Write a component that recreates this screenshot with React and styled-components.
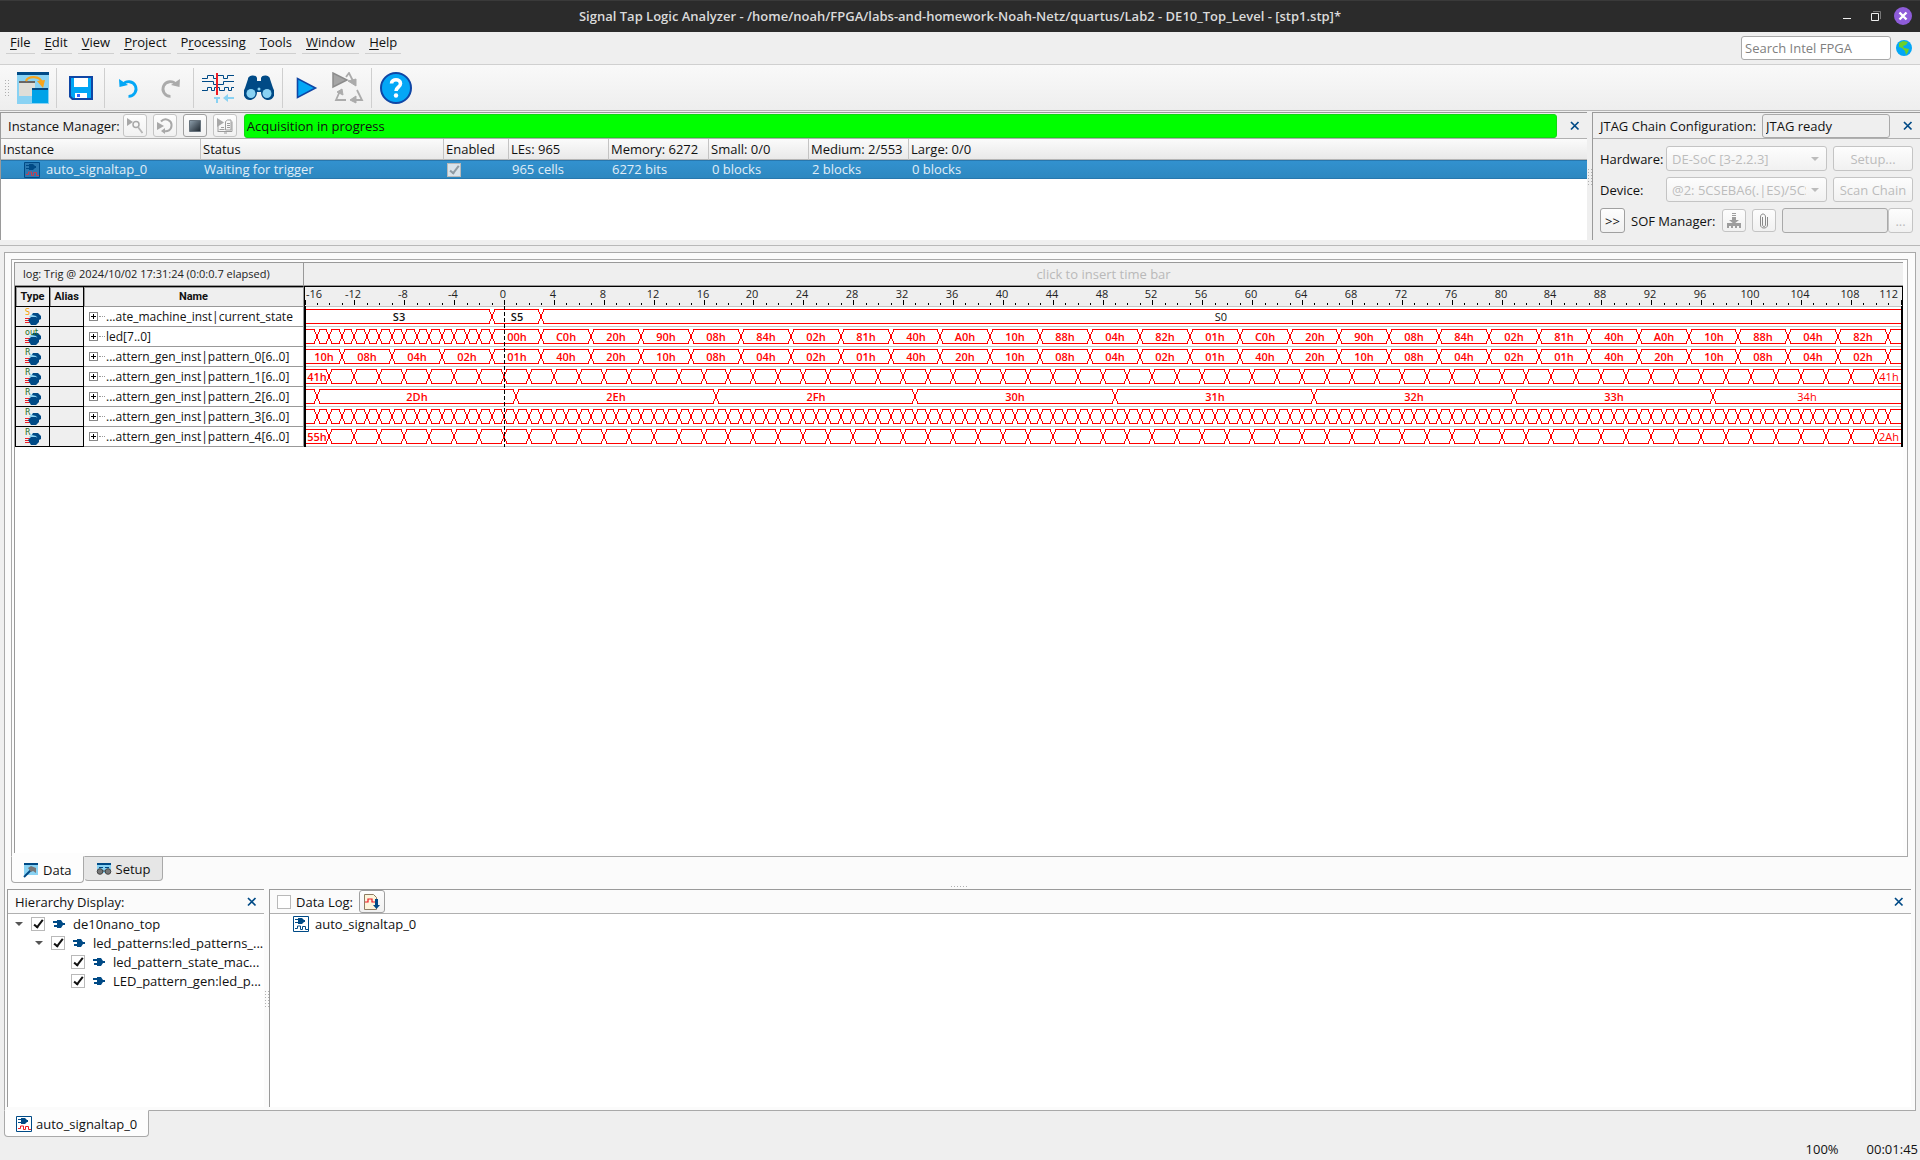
import React, { useLayoutEffect, useRef, useState } from "react";
import styled, { createGlobalStyle, css } from "styled-components";

const sans = `"Open Sans", "Noto Sans", sans-serif`;
const navy = "#004a86";
const line = "#a9a9a9";

const GlobalStyle = createGlobalStyle`
  *, *::before, *::after { box-sizing: border-box; }
  body { margin: 0; background: #efefef; }
  button, input, select { font: inherit; color: inherit; margin: 0; }
`;

/* ---------- window frame ---------- */

const Window = styled.div`
  display: flex;
  flex-direction: column;
  min-height: 100vh;
  background: #efefef;
  color: #111;
  font: 13px/18px ${sans};
`;

const TitleBar = styled.header`
  display: grid;
  grid-template-columns: 1fr auto 1fr;
  align-items: center;
  height: 32px;
  padding: 0 8px 1px;
  background: #2b2b2b;
  border-top: 1px solid #3a3a3a;
`;

const Title = styled.h1`
  grid-column: 2;
  margin: 0;
  color: #dadada;
  font: 600 13px/18px ${sans};
`;

const WindowButtons = styled.div`
  display: flex;
  justify-content: flex-end;
  gap: 10px;
`;

const WindowButton = styled.button`
  width: 18px;
  height: 18px;
  padding: 0;
  border: 0;
  border-radius: 50%;
  background: ${(p) => (p.$accent ? "#8e5cd9" : "transparent")};
  svg { display: block; }
`;

const MenuBar = styled.nav`
  display: flex;
  align-items: flex-start;
  gap: 6px;
  height: 33px;
  padding: 0 8px 0 6px;
  border-bottom: 1px solid #d0d0d0;
`;

const MenuButton = styled.button`
  height: 22px;
  padding: 0 4px 2px;
  border: 0;
  border-bottom: 1px solid #cfcfcf;
  background: none;
  line-height: 18px;
  u { text-underline-offset: 2px; }
`;

const SearchForm = styled.form`
  display: flex;
  align-items: center;
  gap: 5px;
  margin: 4px 0 0 auto;
`;

const fieldLook = css`
  height: 24px;
  padding: 0 3px;
  border: 1px solid ${line};
  border-radius: 3px;
  outline: 0;
`;

const SearchInput = styled.input`
  ${fieldLook}
  width: 150px;
  background: #fff;
  &::placeholder { color: #7f7f7f; opacity: 1; }
`;

const BareButton = styled.button`
  display: flex;
  padding: 0;
  border: 0;
  background: none;
`;

const ToolBar = styled.div`
  display: flex;
  align-items: center;
  height: 46px;
  padding-left: 4px;
  background: linear-gradient(#f9f9f9, #eee);
  border-bottom: 1px solid #b5b5b5;
`;

const Grip = styled.span`
  width: ${(p) => (p.$flat ? 18 : 5)}px;
  height: ${(p) => (p.$flat ? 2 : 17)}px;
  background-image: radial-gradient(#b0b0b0 0 1px, transparent 1px);
  background-size: 3px 3px;
`;

const ToolButton = styled.button`
  display: flex;
  justify-content: center;
  align-items: center;
  width: 41px;
  height: 40px;
  padding: 0;
  border: 0;
  background: none;
`;

const ToolGroup = styled.div`
  display: flex;
  padding: 0 3px;
  & + & { border-left: 1px solid #cfcfcf; }
`;

/* ---------- docked panels ---------- */

const TopRow = styled.div`
  display: grid;
  grid-template-columns: minmax(0, 1fr) 5px 328px;
  padding: 1px 0 5px;
  border-bottom: 1px solid #b8b8b8;
`;

const Splitter = styled.div`
  display: flex;
  justify-content: center;
  align-items: center;
  overflow: hidden;
`;

const Panel = styled.section`
  display: flex;
  flex-direction: column;
  min-width: 0;
  border: solid #9a9a9a;
  border-width: 1px 0 0 1px;
  background: ${(p) => p.$bg || "#fff"};
`;

const PanelHead = styled.div`
  display: flex;
  align-items: center;
  gap: ${(p) => p.$gap || 6}px;
  height: ${(p) => p.$height || 26}px;
  padding: 0 7px;
  border-bottom: 1px solid #b0b0b0;
  background: ${(p) => p.$bg || "#efefef"};
`;

const PanelTitle = styled.h2`
  margin: 0;
  font: inherit;
  white-space: nowrap;
`;

const ButtonStrip = styled.div`
  display: flex;
  gap: 6px;
  margin-right: 4px;
`;

const CloseButton = styled(BareButton)`
  flex: none;
  justify-content: center;
  width: 10px;
  margin-left: auto;
`;

const raised = css`
  border: 1px solid ${(p) => (p.disabled ? "#c4c4c4" : "#a0a0a0")};
  border-radius: 3px;
  background: linear-gradient(#fdfdfd, #f1f1f1);
  color: ${(p) => (p.disabled ? "#bcbcbc" : "#111")};
`;

const PushButton = styled.button`
  ${raised}
  display: flex;
  flex: none;
  justify-content: center;
  align-items: center;
  width: ${(p) => p.$width || 24}px;
  height: ${(p) => p.$height || 23}px;
  padding: 0;
  white-space: nowrap;
`;

const Progress = styled.div`
  flex: 1;
  height: 24px;
  margin-right: 10px;
  padding: 0 2px;
  border: 1px solid #12d812;
  border-radius: 3px;
  background: #00ff00;
  line-height: 22px;
`;

const InstanceTable = styled.table`
  width: 100%;
  table-layout: fixed;
  border-spacing: 0;
  text-align: left;
  th {
    height: 21px;
    padding: 0 2px;
    font-weight: 400;
    white-space: nowrap;
    background: linear-gradient(#fbfbfb, #e9e9e9);
    border-right: 1px solid #c4c4c4;
    border-bottom: 1px solid #b5b5b5;
  }
  th:last-child { border-right: 0; }
  td {
    height: 19px;
    padding: 0 3px;
    color: #e0edf6;
    line-height: 17px;
    white-space: nowrap;
    background: linear-gradient(#3291cf, #2d88c0);
    border: solid #2877ad;
    border-width: 1px 0;
  }
`;

const Column = styled.col`
  width: ${(p) => (p.$width ? `${p.$width}px` : "auto")};
`;

const IconText = styled.span`
  display: flex;
  align-items: center;
  gap: 6px;
  padding-left: ${(p) => p.$indent || 0}px;
  svg { flex: none; }
`;

const CheckBox = styled.input`
  appearance: none;
  display: block;
  flex: none;
  position: relative;
  width: 14px;
  height: 14px;
  border: 1px solid #b9b9b9;
  background: ${(p) => (p.disabled ? "#d9e3ea" : "#fff")};
  &:checked::after {
    content: "";
    position: absolute;
    left: 4px;
    top: 0;
    width: 5px;
    height: 10px;
    border: solid ${(p) => (p.disabled ? "#8f9ba3" : "#111")};
    border-width: 0 2px 2px 0;
    transform: rotate(38deg);
  }
`;

const JtagForm = styled.form`
  display: flex;
  flex-direction: column;
  gap: 6px;
  padding: 7px;
`;

const FormRow = styled.div`
  display: grid;
  grid-template-columns: 60px minmax(0, 1fr) 80px;
  align-items: center;
  column-gap: 6px;
`;

const SofRow = styled.div`
  display: flex;
  align-items: center;
  gap: 6px;
`;

const SelectWrap = styled.div`
  display: grid;
  align-items: center;
  > * { grid-area: 1 / 1; }
  > svg { justify-self: end; margin-right: 8px; pointer-events: none; }
`;

const Select = styled.select`
  ${raised}
  appearance: none;
  width: 100%;
  height: 25px;
  padding: 0 20px 0 5px;
  opacity: 1;
  overflow: hidden;
`;

const ReadOnlyField = styled.input`
  ${fieldLook}
  flex: 1;
  min-width: 0;
  height: ${(p) => (p.disabled ? 25 : 24)}px;
  margin-right: ${(p) => (p.disabled ? 0 : 7)}px;
  background: ${(p) => (p.disabled ? "#ebebeb" : "#efefef")};
`;

const FieldWithButton = styled.div`
  display: flex;
  flex: 1;
  min-width: 0;
`;

/* ---------- document area ---------- */

const SplitHandle = styled.div`
  display: flex;
  justify-content: center;
  align-items: center;
  height: ${(p) => p.$height}px;
`;

const Document = styled.main`
  display: flex;
  flex: 1;
  flex-direction: column;
  margin: 6px 4px 0;
  padding: 6px 4px 3px 2px;
  border: 1px solid ${line};
  background: #fbfbfb;
`;

const DataFrame = styled.div`
  display: flex;
  flex: 1;
  flex-direction: column;
  margin: 0 3px 0 4px;
  padding: 2px 4px 3px 2px;
  border: 1px solid ${line};
  background: #fdfdfd;
`;

const DataPane = styled.div`
  display: grid;
  flex: 1;
  grid-template-columns: 289px minmax(0, 1fr);
  grid-template-rows: 23px 1fr;
  border: solid #999;
  border-width: 1px 0 0 1px;
  background: #fff;
`;

const LogCell = styled.div`
  padding: 0 8px;
  border-right: 1px solid #999;
  border-bottom: 1px solid #999;
  background: #efefef;
  color: #222;
  font-size: 11px;
  line-height: 22px;
  white-space: nowrap;
`;

const TimeBarCell = styled(LogCell)`
  border-right: 0;
  color: #b9b9b9;
  font-size: 13px;
  text-align: center;
`;

const SignalTable = styled.table`
  align-self: start;
  width: 100%;
  table-layout: fixed;
  border-spacing: 0;
  font-size: 12px;
  th {
    height: 20px;
    padding: 0;
    border: solid #000;
    border-width: 1px 1px 0 0;
    background: #efefef;
    box-shadow: inset 1px 1px #999;
    font: 700 11px/14px Roboto, sans-serif;
  }
  td {
    height: 20px;
    padding: 0;
    border: solid #000;
    border-width: 1px 1px 0 0;
    background: #efefef;
  }
  th:first-child, td:first-child { border-left: 1px solid #000; }
  td:last-child {
    border-color: #999;
    background: #fff;
  }
  th:last-child { border-right-color: #999; }
  tr:last-child td { height: 21px; border-bottom-width: 1px; }
  svg { display: block; }
`;

const TypeCell = styled.span`
  display: flex;
  justify-content: center;
`;

const NameCell = styled.span`
  display: flex;
  align-items: center;
  gap: 1px;
  padding-left: 5px;
  white-space: nowrap;
`;

const NodeDots = styled.span`
  flex: none;
  width: 6px;
  border-top: 1px dotted #999;
`;

const WaveArea = styled.div`
  min-width: 0;
  svg { display: block; }
`;

const WaveText = styled.text`
  font: ${(p) => (p.$bold ? 600 : 400)} 11px ${sans};
  fill: ${(p) => p.$color};
  text-anchor: ${(p) => p.$anchor || "middle"};
`;

const Tabs = styled.div`
  display: flex;
  align-items: flex-start;
  margin: -1px 4px 0;
`;

const Tab = styled.button`
  display: flex;
  align-items: center;
  gap: 4px;
  height: ${(p) => (p.$active ? 27 : 25)}px;
  padding: 0 11px;
  border: 1px solid ${line};
  border-top-color: ${(p) => (p.$active ? "#fdfdfd" : line)};
  border-left-color: ${(p) => (p.$active ? line : "transparent")};
  border-radius: 0 0 4px 4px;
  background: ${(p) => (p.$active ? "#fdfdfd" : "#e6e6e6")};
`;

const LowerRow = styled.div`
  display: grid;
  grid-template-columns: 257px 5px minmax(0, 1fr);
  height: 218px;
`;

const TreeList = styled.ul`
  margin: 0;
  padding: 0;
  list-style: none;
`;

const TreeItem = styled.li`
  display: grid;
  grid-template-columns: 8px 14px 12px minmax(0, 1fr);
  align-items: center;
  column-gap: 8px;
  height: 19px;
  padding-left: ${(p) => 7 + p.$level * 20}px;
  label { white-space: nowrap; }
`;

const LogItem = styled(TreeItem)`
  display: flex;
  gap: 6px;
  padding-left: 23px;
`;

const CheckLabel = styled.label`
  display: flex;
  align-items: center;
  gap: 5px;
`;

const StatusBar = styled.footer`
  display: flex;
  justify-content: flex-end;
  gap: 28px;
  height: 23px;
  padding: 3px 2px 0;
`;

/* ---------- icons ---------- */

const CloseIcon = () => (
  <svg width="10" height="10" viewBox="0 0 10 10" stroke={navy} strokeWidth="1.7">
    <path d="M1 1l7.5 7.5M8.500 1L1 8.500" />
  </svg>
);

const SwapWindowsIcon = () => (
  <svg width="32" height="32" viewBox="0 0 32 32">
    <path fill="#89d2f3" d="M0 0h32v32H0z" />
    <path fill={navy} d="M0 0h32v3H0z" />
    <path fill="#deded8" d="M2 9h16v15H2z" />
    <path fill="#666" d="M2 9h16v2H2z" />
    <path d="M9 9c2-5 14-6 16 2" fill="none" stroke="#f8a51b" strokeWidth="2.200" />
    <path fill="#f8a51b" d="M20 9l8-1-2 8z" />
    <path fill="#00a3e8" d="M15 16h16v15H15z" />
    <path fill={navy} d="M15 16h16v2H15z" />
  </svg>
);

const SaveIcon = () => (
  <svg width="24" height="24" viewBox="0 0 24 24">
    <path fill="#0f46a5" d="M0 0h24v24H3l-3-3z" />
    <path fill="#00a6f5" d="M2 2h20v20H4l-2-2z" />
    <path fill="#fff" d="M5 2h14v9H5zM6 17h12v5H6z" />
    <path fill="#2d63ff" d="M8 18h3v3H8z" />
  </svg>
);

const UndoIcon = () => (
  <svg width="20" height="22" viewBox="0 0 20 22" fill="none">
    <path d="M4 7.500A7.300 7.300 0 1 1 9.500 19.300" stroke="#04a7f6" strokeWidth="2.800" />
    <path fill="#04a7f6" d="M0 2l.5 8 8.500-2z" />
  </svg>
);

const RedoIcon = () => (
  <svg width="20" height="22" viewBox="0 0 20 22" fill="none">
    <path d="M16 7.500A7.300 7.300 0 1 0 10.500 19.300" stroke="#ababab" strokeWidth="2.800" />
    <path fill="#ababab" d="M20 2l-.5 8-8.500-2z" />
  </svg>
);

const WaveToolIcon = () => (
  <svg width="32" height="32" viewBox="0 0 32 32" fill="none">
    <path
      stroke={navy}
      d="M0 6.500h5.500v-3h6v3h4v-3h6v3h4v-3H32M0 9.500h11.500v3h10v-3H32M0 18.500h5.500v-3h4v3h3v-3h5v3h5v-3h4v3h3v-3H32"
    />
    <path fill="#ed1c24" d="M14 1h2v22h-2z" />
    <path fill="#89d2f3" d="M12 25h6v2h-2v4h-2v-4h-2zM21 26l5-4v3h6v2h-6v3z" />
  </svg>
);

const BinocularsIcon = () => (
  <svg width="30" height="26" viewBox="0 0 30 26">
    <path
      fill={navy}
      d="M4 4c0-4 8-5 9-1v3h4V3c1-4 9-3 9 1l3 9c4 7-1 13-6 12-4-1-6-4-6-8h-4c0 4-2 7-6 8-5 1-10-5-6-12z"
    />
    <circle cx="7" cy="18.500" r="4.500" fill="#89d2f3" />
    <circle cx="23" cy="18.500" r="4.500" fill="#89d2f3" />
    <circle cx="15" cy="14" r="1.500" fill="#89d2f3" />
  </svg>
);

const RunIcon = () => (
  <svg width="22" height="22" viewBox="0 0 22 22">
    <path d="M1.500 1.500v19l18-9.500z" fill="#04a7f6" stroke="#0f46a5" strokeWidth="1.600" />
  </svg>
);

const LoopRunIcon = () => (
  <svg width="32" height="32" viewBox="0 0 32 32" fill="none" stroke="#ababab" strokeWidth="1.800">
    <path d="M14 5l3-4 4 8M25 18l5 10h-7M14 28H4l4-9" />
    <path fill="#ababab" strokeWidth="1" d="M16 9l8-2v7zM18 28l6-4v7zM5 20l5-3 1 6z" />
    <path fill="#a5a5a5" stroke="#8c8c8c" strokeWidth="1.500" d="M1 1v14l14-7z" />
  </svg>
);

const HelpIcon = () => (
  <svg width="32" height="32" viewBox="0 0 32 32">
    <circle cx="16" cy="16" r="15" fill="#04a7f6" stroke="#0f46a5" strokeWidth="2" />
    <path d="M11.500 11.500c0-5 9-5 9 0 0 4-4.500 3.500-4.500 7.500" fill="none" stroke="#fff" strokeWidth="3.600" />
    <circle cx="16" cy="23.500" r="2.200" fill="#fff" />
  </svg>
);

const GlobeIcon = () => (
  <svg width="16" height="16" viewBox="0 0 16 16">
    <circle cx="8" cy="8" r="8" fill="#04a7f6" />
    <path fill="#6cd02a" d="M3 3l4-2 5 1-2 3-3 1 1 2 5 1-1 3-2 3-1-4-3-3-3-1z" />
  </svg>
);

const RunOnceIcon = () => (
  <svg width="16" height="16" viewBox="0 0 16 16" fill="none">
    <path fill="#a8a8a8" d="M0 0v8l6-4z" />
    <circle cx="9" cy="6.500" r="3" stroke="#a8a8a8" strokeWidth="1.500" />
    <path d="M11 9l4.500 6" stroke="#b5b5b5" strokeWidth="1.800" />
  </svg>
);

const RepeatIcon = () => (
  <svg width="16" height="16" viewBox="0 0 16 16" fill="none">
    <path d="M4 3.500c4-4.500 11-1 10.500 4 0 4.500-4 6.500-8 5.500" stroke="#a8a8a8" strokeWidth="2" />
    <path fill="#a8a8a8" d="M0 4v8l7-4zM8 10v6l-4-3z" />
  </svg>
);

const StopIcon = () => (
  <svg width="12" height="12" viewBox="0 0 12 12">
    <defs>
      <linearGradient id="stop" x2="1" y2="1">
        <stop stopColor="#8fa0ad" />
        <stop offset="1" stopColor="#1c252d" />
      </linearGradient>
    </defs>
    <path fill="url(#stop)" stroke="#66727c" d="M.5.5h11v11H.5z" />
  </svg>
);

const BookIcon = () => (
  <svg width="16" height="16" viewBox="0 0 16 16" fill="none" stroke="#9c9c9c">
    <path d="M1 13.500h14v-10M8.500 12V3.500l2-1.500h3.500v10h-4zM1 5v9M10 5.500h3M10 7.500h3M10 9.500h3M2.500 11.500h5M4 9.500h3M7 15h3" />
    <path fill="#a8a8a8" stroke="none" d="M0 0v9l7-4.500z" />
  </svg>
);

const SofIcon = () => (
  <svg width="16" height="16" viewBox="0 0 16 16" fill="#9d9d9d">
    <path d="M6 0h4v1H6zM6 2h4v1H6zM6 4h4v3h3l-5 4-5-4h3zM1 10h14v3H1zM1 13h2v2H1zM5 13h2v2H5zM9 13h2v2H9zM13 13h2v2h-2z" />
  </svg>
);

const ClipIcon = () => (
  <svg width="8" height="16" viewBox="0 0 8 16" fill="none" stroke="#8a8a8a">
    <path d="M2.500 4v8c0 2 3 2 3 0V4c0-4-5-4-5 0v8c0 4 7 4 7 0V4" />
  </svg>
);

const InstanceIcon = ({ wave = "#ed1c24", fill = "#fff" }) => (
  <svg width="16" height="16" viewBox="0 0 16 16">
    <path fill={fill} stroke={navy} d="M.5.5h15v15H.5z" />
    <path fill={navy} d="M5 2h4l2 2h1v2h-1L9 8H5V7H2V6h3V4H2V3h3z" />
    <path d="M2 12.500h2.500v-2.500h3v3.500h2v-3h3v3H15" fill="none" stroke={wave} />
  </svg>
);

const PlugIcon = () => (
  <svg width="12" height="10" viewBox="0 0 12 10" fill={navy}>
    <path d="M0 2h4V1h4l2 3h2v2h-2L8 9H4V8H1V6h3V4H0z" />
  </svg>
);

const DataTabIcon = () => (
  <svg width="16" height="16" viewBox="0 0 16 16">
    <path fill="#89d2f3" d="M1 1h14v12H1z" />
    <path fill={navy} d="M1 1h14v2H1z" />
    <path d="M1 15l7-7" stroke={navy} strokeWidth="2" />
    <path fill="#777" d="M5 6l3-2 5 2v5l-3-2-2 1z" />
  </svg>
);

const SetupTabIcon = () => (
  <svg width="16" height="14" viewBox="0 0 16 14">
    <path fill="#89d2f3" d="M1 1h14v10H1z" />
    <path fill={navy} d="M1 1h14v2H1zM3 5h4v1H3zM9 5h4v1H9z" />
    <circle cx="4" cy="9.500" r="2.800" fill="#777" stroke="#444" />
    <circle cx="12" cy="9.500" r="2.800" fill="#777" stroke="#444" />
    <path stroke="#444" d="M6 9h4" />
  </svg>
);

const LogIcon = () => (
  <svg width="16" height="16" viewBox="0 0 16 16">
    <path fill="#fdf5dc" stroke="#8d7c62" d="M.5.5h9l3 3v12H.5z" />
    <path d="M1 8h3V5h4v3h4" fill="none" stroke="#ed1c24" strokeWidth="1.200" />
    <path fill={navy} d="M11 5h3v6h2l-3.500 4L9 11h2z" />
  </svg>
);

const Triangle = ({ color = "#555" }) => (
  <svg width="8" height="4" viewBox="0 0 8 4">
    <path fill={color} d="M0 0h8L4 4z" />
  </svg>
);

const TypeIcon = ({ kind }) => (
  <svg width="18" height="18" viewBox="0 0 18 18">
    <path stroke="#ed1c24" d="M1 10.500h6M1 12.500h6M1 14.500h6" />
    <path fill="#89d2f3" d="M5 9l4-4 5 1 3 3-4 3z" />
    <path fill={navy} d="M9 5h5l3 3v3l-2 1-3-4-4-1zM4 12l3-3h5l3 2v3l-3 3H7z" />
    <text
      x="1"
      y="7"
      fontFamily="DejaVu Sans, sans-serif"
      fontSize="8"
      fill={kind === "S" ? "#f5a000" : "#1c6e1c"}
    >
      {kind}
    </text>
  </svg>
);

/* ---------- captured data ---------- */

const FIRST = -16;
const LAST = 112;
const ROW = 20;

const evenly = (from, to, step) => {
  const marks = [];
  for (let t = from; t <= to; t += step) marks.push(t);
  return marks;
};

const ledCycle = "C0 20 90 08 84 02 81 40 A0 10 88 04 82 01".split(" ");
const walkCycle = "40 20 10 08 04 02 01".split(" ");
const hex = (cycle, i) => `${cycle[i % cycle.length]}h`;

const signals = [
  {
    type: "S",
    name: "...ate_machine_inst|current_state",
    edges: [-1, 3],
    label: (i) => ["S3", "S5", "S0"][i],
    color: "#111",
  },
  {
    type: "out",
    name: "led[7..0]",
    edges: [...evenly(-15, -1, 1), ...evenly(3, 111, 4)],
    label: (i, last) => (i < 15 || last ? "" : i === 15 ? "00h" : hex(ledCycle, i - 16)),
  },
  {
    type: "R",
    name: "...attern_gen_inst|pattern_0[6..0]",
    edges: evenly(-13, 111, 4),
    label: (i, last) => (last ? "" : hex(walkCycle, i + 2)),
  },
  {
    type: "R",
    name: "...attern_gen_inst|pattern_1[6..0]",
    edges: evenly(-14, 110, 2),
    label: (i, last) => (i === 0 || last ? "41h" : ""),
  },
  {
    type: "R",
    name: "...attern_gen_inst|pattern_2[6..0]",
    edges: evenly(-15, 97, 16),
    label: (i) => ["", "2Dh", "2Eh", "2Fh", "30h", "31h", "32h", "33h", "34h"][i],
  },
  {
    type: "R",
    name: "...attern_gen_inst|pattern_3[6..0]",
    edges: evenly(-15, 111, 1),
    label: () => "",
  },
  {
    type: "R",
    name: "...attern_gen_inst|pattern_4[6..0]",
    edges: evenly(-14, 110, 2),
    label: (i, last) => (i === 0 ? "55h" : last ? "2Ah" : ""),
  },
];

function useWidth() {
  const ref = useRef(null);
  const [width, setWidth] = useState(1599);
  useLayoutEffect(() => {
    const measure = () => setWidth(Math.floor(ref.current.clientWidth));
    measure();
    const observer = new ResizeObserver(measure);
    observer.observe(ref.current);
    return () => observer.disconnect();
  }, []);
  return [ref, width];
}

function Trace({ signal, x, y }) {
  const top = y + 3.5;
  const bottom = y + 17.5;
  const stops = [FIRST, ...signal.edges, LAST];
  const slope = 3;
  let d = "";
  const labels = [];
  for (let i = 0; i < stops.length - 1; i += 1) {
    const first = i === 0;
    const last = i === stops.length - 2;
    const a = x(stops[i]);
    const b = x(stops[i + 1]);
    const from = first ? a : a + slope;
    const to = last ? b : b - slope;
    d += `M${from} ${top}H${to}M${from} ${bottom}H${to}`;
    if (!last) {
      d += `M${to} ${top}L${b + slope} ${bottom}M${to} ${bottom}L${b + slope} ${top}`;
    }
    const text = signal.label(i, last);
    if (text) {
      labels.push(
        <WaveText
          key={stops[i]}
          x={Math.round((a + b) / 2)}
          y={y + 15}
          $bold={!last}
          $color={signal.color || "#ff0000"}
        >
          {text}
        </WaveText>
      );
    }
  }
  return (
    <g>
      <path d={d} fill="none" stroke="#ff0000" shapeRendering="crispEdges" />
      {labels}
    </g>
  );
}

function Waves() {
  const [ref, width] = useWidth();
  const x = (t) => Math.floor(1 + ((t - FIRST) * (width - 3)) / (LAST - FIRST));
  const height = ROW + signals.length * ROW + 1;
  const ticks = evenly(FIRST, LAST, 1);
  return (
    <WaveArea ref={ref}>
      <svg width={width} height={height} role="img" aria-label="Captured waveforms">
        <rect width={width} height={ROW} fill="#efefef" />
        <g shapeRendering="crispEdges" stroke="#000">
          <path d={`M0 .5H${width}M.5 0V${ROW}M${width - 0.5} 0V${ROW}`} />
          <path
            d={ticks
              .map((t) => `M${x(t) + 0.5} ${t % 4 ? 17 : 14}V19`)
              .join("")}
          />
        </g>
        {ticks
          .filter((t) => t % 4 === 0)
          .map((t) => (
            <WaveText
              key={t}
              x={t === FIRST ? 2 : t === LAST ? width - 5 : x(t) - 1}
              y="12"
              $color="#222"
              $anchor={t === FIRST ? "start" : t === LAST ? "end" : "middle"}
            >
              {t}
            </WaveText>
          ))}
        {signals.map((signal, i) => (
          <g key={signal.name}>
            <path stroke="#c4c4c4" d={`M0 ${ROW * (i + 1) + 0.5}H${width}`} />
            <Trace signal={signal} x={x} y={ROW * (i + 1)} />
          </g>
        ))}
        <path stroke="#c4c4c4" d={`M0 ${height - 0.5}H${width}`} />
        <path
          stroke="#000"
          shapeRendering="crispEdges"
          strokeDasharray="4 2"
          d={`M${x(0) + 0.5} ${ROW}V${height}`}
        />
        <path fill="#000" d={`M0 ${ROW}h2V${height}h-2zM${width - 2} ${ROW}h2V${height}h-2z`} />
      </svg>
    </WaveArea>
  );
}

/* ---------- sections ---------- */

const menus = [
  ["", "F", "ile"],
  ["", "E", "dit"],
  ["", "V", "iew"],
  ["", "P", "roject"],
  ["P", "r", "ocessing"],
  ["", "T", "ools"],
  ["", "W", "indow"],
  ["", "H", "elp"],
];

const tools = [
  [["Switch window", SwapWindowsIcon]],
  [["Save", SaveIcon]],
  [["Undo", UndoIcon], ["Redo", RedoIcon]],
  [["Insert time bar", WaveToolIcon], ["Find", BinocularsIcon]],
  [["Run analysis", RunIcon], ["Autorun analysis", LoopRunIcon]],
  [["Help", HelpIcon]],
];

const instanceColumns = [
  ["Instance", 200],
  ["Status", 243],
  ["Enabled", 65],
  ["LEs: 965", 100],
  ["Memory: 6272", 100],
  ["Small: 0/0", 100],
  ["Medium: 2/553", 100],
  ["Large: 0/0"],
];

const hierarchy = [
  { name: "de10nano_top", level: 0, open: true },
  { name: "led_patterns:led_patterns_...", level: 1, open: true },
  { name: "led_pattern_state_mac...", level: 2 },
  { name: "LED_pattern_gen:led_p...", level: 2 },
];

function InstanceManager() {
  return (
    <Panel>
      <PanelHead $gap={3}>
        <PanelTitle>Instance Manager:</PanelTitle>
        <ButtonStrip>
          <PushButton disabled aria-label="Run once"><RunOnceIcon /></PushButton>
          <PushButton disabled aria-label="Run continuously"><RepeatIcon /></PushButton>
          <PushButton aria-label="Stop"><StopIcon /></PushButton>
          <PushButton disabled aria-label="Read data"><BookIcon /></PushButton>
        </ButtonStrip>
        <Progress role="status">Acquisition in progress</Progress>
        <CloseButton aria-label="Close instance manager"><CloseIcon /></CloseButton>
      </PanelHead>
      <InstanceTable>
        <colgroup>
          {instanceColumns.map(([name, width]) => <Column key={name} $width={width} />)}
        </colgroup>
        <thead>
          <tr>{instanceColumns.map(([name]) => <th key={name} scope="col">{name}</th>)}</tr>
        </thead>
        <tbody>
          <tr>
            <td>
              <IconText $indent={20}>
                <InstanceIcon fill="#2b78b0" wave="#c83c50" />
                auto_signaltap_0
              </IconText>
            </td>
            <td>Waiting for trigger</td>
            <td><CheckBox type="checkbox" checked disabled readOnly aria-label="Enabled" /></td>
            <td>965 cells</td>
            <td>6272 bits</td>
            <td>0 blocks</td>
            <td>2 blocks</td>
            <td>0 blocks</td>
          </tr>
        </tbody>
      </InstanceTable>
    </Panel>
  );
}

function JtagPanel() {
  return (
    <Panel $bg="#efefef">
      <PanelHead>
        <label htmlFor="jtag-state">JTAG Chain Configuration:</label>
        <ReadOnlyField id="jtag-state" readOnly value="JTAG ready" />
        <CloseButton aria-label="Close JTAG panel"><CloseIcon /></CloseButton>
      </PanelHead>
      <JtagForm onSubmit={(e) => e.preventDefault()}>
        <FormRow>
          <label htmlFor="hardware">Hardware:</label>
          <SelectWrap>
            <Select id="hardware" disabled><option>DE-SoC [3-2.2.3]</option></Select>
            <Triangle color="#bcbcbc" />
          </SelectWrap>
          <PushButton type="button" disabled $width={80} $height={25}>Setup...</PushButton>
        </FormRow>
        <FormRow>
          <label htmlFor="device">Device:</label>
          <SelectWrap>
            <Select id="device" disabled><option>@2: 5CSEBA6(.|ES)/5CSEMA6</option></Select>
            <Triangle color="#bcbcbc" />
          </SelectWrap>
          <PushButton type="button" disabled $width={80} $height={25}>Scan Chain</PushButton>
        </FormRow>
        <SofRow>
          <PushButton type="button" $width={25} $height={25}>&gt;&gt;</PushButton>
          <label htmlFor="sof">SOF Manager:</label>
          <PushButton type="button" disabled aria-label="Program device"><SofIcon /></PushButton>
          <PushButton type="button" disabled aria-label="Attach file"><ClipIcon /></PushButton>
          <FieldWithButton>
            <ReadOnlyField id="sof" disabled />
            <PushButton type="button" disabled $width={25} $height={25}>...</PushButton>
          </FieldWithButton>
        </SofRow>
      </JtagForm>
    </Panel>
  );
}

function SignalNames() {
  return (
    <SignalTable>
      <colgroup>
        <Column $width={35} />
        <Column $width={34} />
        <Column />
      </colgroup>
      <thead>
        <tr><th scope="col">Type</th><th scope="col">Alias</th><th scope="col">Name</th></tr>
      </thead>
      <tbody>
        {signals.map(({ type, name }) => (
          <tr key={name}>
            <td><TypeCell><TypeIcon kind={type} /></TypeCell></td>
            <td />
            <td>
              <NameCell>
                <BareButton aria-label={`Expand ${name}`}>
                  <svg width="9" height="9" viewBox="0 0 9 9" fill="none" shapeRendering="crispEdges">
                    <path stroke="#888" d="M.5.5h8v8h-8z" />
                    <path stroke="#000" d="M2 4.500h5M4.500 2v5" />
                  </svg>
                </BareButton>
                <NodeDots />
                {name}
              </NameCell>
            </td>
          </tr>
        ))}
      </tbody>
    </SignalTable>
  );
}

function Hierarchy() {
  return (
    <Panel>
      <PanelHead $height={24} $bg="#fbfbfb">
        <PanelTitle>Hierarchy Display:</PanelTitle>
        <CloseButton aria-label="Close hierarchy"><CloseIcon /></CloseButton>
      </PanelHead>
      <TreeList>
        {hierarchy.map(({ name, level, open }) => (
          <TreeItem key={name} $level={level}>
            {open ? <BareButton aria-label={`Collapse ${name}`}><Triangle /></BareButton> : <span />}
            <CheckBox type="checkbox" id={name} defaultChecked />
            <PlugIcon />
            <label htmlFor={name}>{name}</label>
          </TreeItem>
        ))}
      </TreeList>
    </Panel>
  );
}

function DataLog() {
  return (
    <Panel>
      <PanelHead $height={24} $bg="#fbfbfb">
        <CheckLabel><CheckBox type="checkbox" />Data Log:</CheckLabel>
        <PushButton $width={26} aria-label="Save to log"><LogIcon /></PushButton>
        <CloseButton aria-label="Close data log"><CloseIcon /></CloseButton>
      </PanelHead>
      <TreeList>
        <LogItem $level={0}><InstanceIcon wave={navy} />auto_signaltap_0</LogItem>
      </TreeList>
    </Panel>
  );
}

export default function App() {
  return (
    <Window>
      <GlobalStyle />
      <TitleBar>
        <Title>
          Signal Tap Logic Analyzer - /home/noah/FPGA/labs-and-homework-Noah-Netz/quartus/Lab2 - DE10_Top_Level - [stp1.stp]*
        </Title>
        <WindowButtons>
          <WindowButton aria-label="Minimize">
            <svg width="18" height="18"><path stroke="#eee" d="M5 11.500h8" /></svg>
          </WindowButton>
          <WindowButton aria-label="Restore">
            <svg width="18" height="18" fill="none">
              <path stroke="#777" d="M7 4.500h7.500V12" />
              <path stroke="#eee" d="M5.500 6.500h7v7h-7z" />
            </svg>
          </WindowButton>
          <WindowButton $accent aria-label="Close">
            <svg width="18" height="18"><path stroke="#fff" strokeWidth="2.400" d="M5.500 5.500l7 7M12.500 5.500l-7 7" /></svg>
          </WindowButton>
        </WindowButtons>
      </TitleBar>
      <MenuBar>
        {menus.map(([before, key, after]) => (
          <MenuButton key={before + key + after}>{before}<u>{key}</u>{after}</MenuButton>
        ))}
        <SearchForm onSubmit={(e) => e.preventDefault()}>
          <SearchInput type="text" placeholder="Search Intel FPGA" aria-label="Search Intel FPGA" />
          <BareButton aria-label="Search"><GlobeIcon /></BareButton>
        </SearchForm>
      </MenuBar>
      <ToolBar>
        <Grip />
        {tools.map((group) => (
          <ToolGroup key={group[0][0]}>
            {group.map(([name, Icon]) => (
              <ToolButton key={name} aria-label={name}><Icon /></ToolButton>
            ))}
          </ToolGroup>
        ))}
      </ToolBar>
      <TopRow>
        <InstanceManager />
        <Splitter><Grip /></Splitter>
        <JtagPanel />
      </TopRow>
      <Document>
        <DataFrame>
          <DataPane>
            <LogCell>log: Trig @ 2024/10/02 17:31:24 (0:0:0.7 elapsed)</LogCell>
            <TimeBarCell>click to insert time bar</TimeBarCell>
            <SignalNames />
            <Waves />
          </DataPane>
        </DataFrame>
        <Tabs>
          <Tab $active><DataTabIcon />Data</Tab>
          <Tab><SetupTabIcon />Setup</Tab>
        </Tabs>
        <SplitHandle $height={6}><Grip $flat /></SplitHandle>
        <LowerRow>
          <Hierarchy />
          <Splitter><Grip /></Splitter>
          <DataLog />
        </LowerRow>
      </Document>
      <Tabs>
        <Tab $active><InstanceIcon />auto_signaltap_0</Tab>
      </Tabs>
      <StatusBar><span>100%</span><span>00:01:45</span></StatusBar>
    </Window>
  );
}
